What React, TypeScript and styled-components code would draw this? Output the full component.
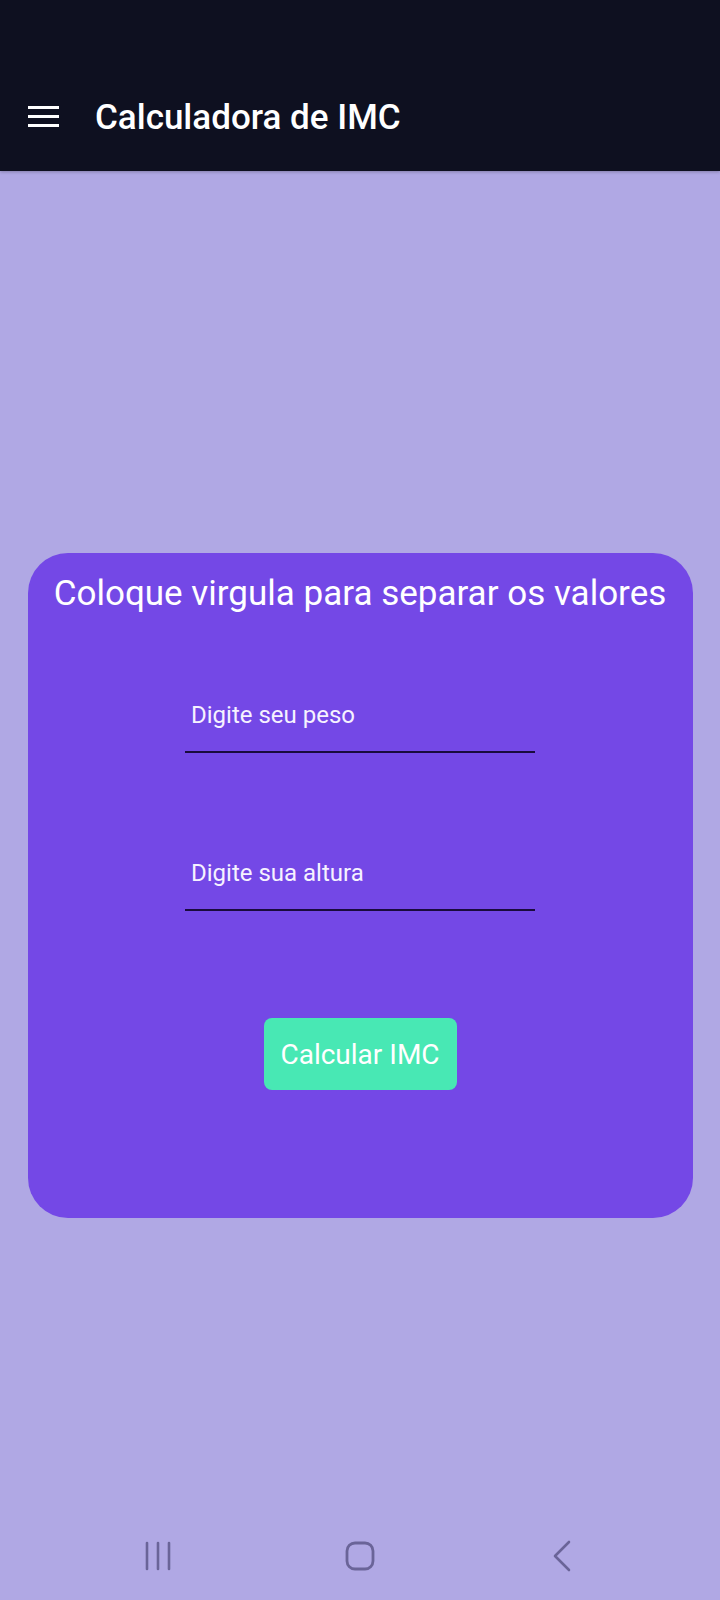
import React from "react";
import styled, { createGlobalStyle } from "styled-components";

const Global = createGlobalStyle`
  html, body { margin: 0; padding: 0; }
  body { background: #b0a8e4; font-family: Roboto, "Noto Sans", sans-serif; }
  * { box-sizing: border-box; }
`;

const Page = styled.div`
  width: 720px;
  min-height: 1600px;
  display: flex;
  flex-direction: column;
  background: #b0a8e4;
`;

const AppBar = styled.header`
  height: 171px;
  background: #0e1020;
  display: flex;
  align-items: flex-end;
  padding: 0 0 33px 28px;
  box-shadow: 0 1px 3px rgba(0, 0, 0, 0.25);
`;

const MenuButton = styled.button`
  width: 31px;
  height: 21px;
  padding: 0;
  border: 0;
  background: transparent;
  display: flex;
  flex-direction: column;
  justify-content: space-between;
  margin-right: 36px;
  margin-bottom: 11px;
  span {
    display: block;
    height: 3px;
    background: #ffffff;
  }
`;

const Title = styled.h1`
  margin: 0;
  color: #ffffff;
  font-family: Roboto, sans-serif;
  font-weight: 500;
  font-size: 35px;
  line-height: 40px;
`;

const Main = styled.main`
  flex: 1;
  display: flex;
  flex-direction: column;
  align-items: center;
  padding-top: 382px;
`;

const Card = styled.section`
  width: 665px;
  height: 665px;
  background: #7448e6;
  border-radius: 40px;
  display: flex;
  flex-direction: column;
  align-items: center;
  padding-top: 17px;
`;

const CardTitle = styled.h2`
  margin: 0;
  color: #ffffff;
  font-family: Roboto, sans-serif;
  font-weight: 400;
  font-size: 35px;
  line-height: 48px;
  text-align: center;
  white-space: nowrap;
`;

const Field = styled.input<{ $gap: number }>`
  width: 350px;
  height: 60px;
  margin-top: ${(p) => p.$gap}px;
  padding: 0 6px 14px;
  border: 0;
  border-bottom: 2px solid #1a0b3e;
  background: transparent;
  color: #ffffff;
  font-family: Roboto, sans-serif;
  font-size: 24px;
  outline: none;
  &::placeholder {
    color: #f6f2ff;
    opacity: 1;
  }
`;

const CalcButton = styled.button`
  margin-top: 107px;
  width: 193px;
  height: 72px;
  border: 0;
  border-radius: 8px;
  background: #48e8b4;
  color: #ffffff;
  font-family: Roboto, sans-serif;
  font-size: 28px;
`;

const NavBar = styled.nav`
  height: 86px;
  display: flex;
  justify-content: center;
  align-items: center;
  padding-bottom: 2px;
`;

const NavSlot = styled.div`
  width: 202px;
  display: flex;
  justify-content: center;
  align-items: center;
  color: #6a6498;
`;

export default function App() {
  return (
    <Page>
      <Global />
      <AppBar>
        <MenuButton aria-label="menu">
          <span />
          <span />
          <span />
        </MenuButton>
        <Title>Calculadora de IMC</Title>
      </AppBar>
      <Main>
        <Card>
          <CardTitle>Coloque virgula para separar os valores</CardTitle>
          <Field $gap={75} placeholder="Digite seu peso" />
          <Field $gap={98} placeholder="Digite sua altura" />
          <CalcButton>Calcular IMC</CalcButton>
        </Card>
      </Main>
      <NavBar>
        <NavSlot>
          <svg width="28" height="30" viewBox="0 0 28 30" fill="none" stroke="currentColor" strokeWidth="2.6" strokeLinecap="round">
            <line x1="3" y1="2" x2="3" y2="28" />
            <line x1="14" y1="2" x2="14" y2="28" />
            <line x1="25" y1="2" x2="25" y2="28" />
          </svg>
        </NavSlot>
        <NavSlot>
          <svg width="30" height="30" viewBox="0 0 30 30" fill="none" stroke="currentColor" strokeWidth="2.8">
            <rect x="2" y="2" width="26" height="26" rx="8" />
          </svg>
        </NavSlot>
        <NavSlot>
          <svg width="20" height="32" viewBox="0 0 20 32" fill="none" stroke="currentColor" strokeWidth="2.6" strokeLinecap="round" strokeLinejoin="round">
            <polyline points="17,2 3,16 17,30" />
          </svg>
        </NavSlot>
      </NavBar>
    </Page>
  );
}
